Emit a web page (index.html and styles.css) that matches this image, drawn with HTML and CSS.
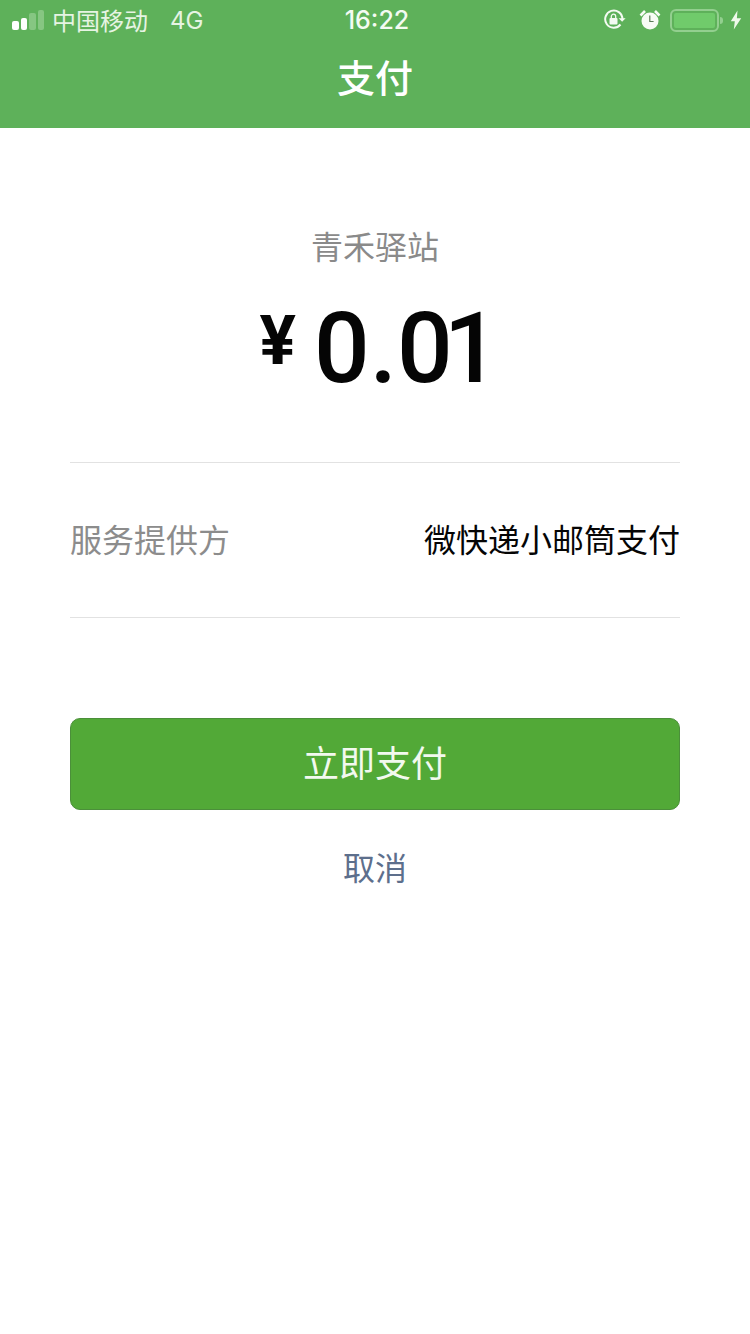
FILE: index.html
```html
<!DOCTYPE html>
<html>

<head>
  <meta charset="UTF-8">
  <meta name="viewport" content="width=device-width, initial-scale=1">
  <title>支付</title>
  <link rel="stylesheet" href="styles.css">
</head>

<body>
  <div class="top">
    <div class="status">
      <div class="status-left">
        <div class="signal">
          <span class="bar bar1"></span>
          <span class="bar bar2"></span>
          <span class="bar bar3"></span>
          <span class="bar bar4"></span>
        </div>
        <span class="carrier">中国移动</span>
        <span class="net">4G</span>
      </div>
      <div class="clock">16:22</div>
      <div class="status-right">
        <svg class="ico-lock" width="24" height="22" viewBox="0 0 24 22">
          <path d="M17.5 15.5A8.6 8.6 0 1 1 19.4 10" fill="none" stroke="#f4fbf2" stroke-width="2"/>
          <path d="M15.6 9.2h7l-3.500 3.600z" fill="#f4fbf2"/>
          <rect x="6.500" y="9" width="8" height="6.500" rx="1" fill="#f4fbf2"/>
          <path d="M8.300 9V7.400a2.200 2.200 0 0 1 4.400 0V9" fill="none" stroke="#f4fbf2" stroke-width="1.300"/>
        </svg>
        <svg class="ico-alarm" width="22" height="22" viewBox="0 0 22 22">
          <circle cx="11" cy="12" r="8.500" fill="#f7fcf5"/>
          <path d="M1.500 6.500 6 2M20.500 6.500 16 2" stroke="#f7fcf5" stroke-width="2.600" fill="none"/>
          <path d="M10.800 6.500v6h3.800" stroke="#5b7d58" stroke-width="1.200" fill="none"/>
        </svg>
        <div class="battery">
          <div class="battery-fill"></div>
        </div>
        <span class="battery-tip"></span>
        <svg class="ico-bolt" width="12" height="20" viewBox="0 0 12 20">
          <path d="M7.500 0.500 0.800 11.200h4L3.800 19.500l7.400-11.300h-4.300z" fill="#eef9ea"/>
        </svg>
      </div>
    </div>
    <div class="title">支付</div>
  </div>

  <div class="main">
    <div class="shop">青禾驿站</div>
    <div class="amount">
      <span class="yen">¥</span>
      <span class="num">0.<span class="num-tight">0</span>1</span>
    </div>
    <div class="row">
      <span class="row-label">服务提供方</span>
      <span class="row-value">微快递小邮筒支付</span>
    </div>
    <button class="pay">立即支付</button>
    <div class="cancel">取消</div>
  </div>
</body>

</html>
```

FILE: styles.css
```css
body {
  margin: 0;
  padding: 0;
  height: 1334px;
  overflow: hidden;
  background-color: #fff;
  font-family: "Noto Sans CJK SC", "Liberation Sans", sans-serif;
}

.top {
  height: 128px;
  background-color: #5eb15a;
  color: #fff;
}

/* status bar */
.status {
  height: 40px;
  padding: 0 8px 0 12px;
  display: grid;
  grid-template-columns: 1fr auto 1fr;
  align-items: center;
}
.status-left, .status-right {
  display: flex;
  align-items: center;
}
.status-right {
  justify-content: flex-end;
}
.signal {
  display: flex;
  align-items: flex-end;
  gap: 2px;
  height: 20px;
}
.bar {
  width: 6.5px;
  border-radius: 2px;
  background-color: #fff;
}
.bar1 { height: 9px; }
.bar2 { height: 12px; }
.bar3 { height: 17px; background-color: #86c682; }
.bar4 { height: 20px; background-color: #86c682; }
.carrier {
  margin-left: 8px;
  font-size: 24px;
  line-height: 40px;
  color: #e6f4e3;
}
.net {
  margin-left: 22px;
  font-family: "Inter", "Liberation Sans", sans-serif;
  font-size: 24px;
  color: #e6f4e3;
}
.clock {
  font-family: "Inter", "Liberation Sans", sans-serif;
  font-size: 25px;
  font-weight: 500;
  color: #f4fbf2;
}
.ico-alarm {
  margin-left: 12px;
}
.battery {
  margin-left: 9px;
  width: 49px;
  height: 23px;
  box-sizing: border-box;
  padding: 2px;
  border: 2px solid #93cf8f;
  border-radius: 6px;
}
.battery-fill {
  height: 100%;
  border-radius: 2px;
  background-color: #70cb6b;
}
.battery-tip {
  margin-left: 1px;
  width: 3px;
  height: 7px;
  border-radius: 0 3px 3px 0;
  background-color: #93cf8f;
}
.ico-bolt {
  margin-left: 7px;
}
.title {
  margin-top: 4px;
  text-align: center;
  font-size: 38px;
  font-weight: 500;
  line-height: 64px;
}

/* content */
.main {
  padding: 0 70px;
  text-align: center;
}
.shop {
  padding-top: 95px;
  font-size: 32px;
  line-height: 44px;
  color: #8a8a8a;
}
.amount {
  height: 173px;
  padding: 22px 0 0 9px;
  display: flex;
  justify-content: center;
  align-items: flex-start;
  color: #050505;
  font-family: "Roboto", "Liberation Sans", sans-serif;
}
.yen {
  margin-top: 2px;
  margin-right: 18px;
  font-size: 68px;
  font-weight: 700;
  line-height: 100px;
}
.num {
  margin-top: 4px;
  font-size: 98px;
  font-weight: 500;
  line-height: 112px;
}
.num-tight {
  letter-spacing: -9px;
}
.row {
  height: 150px;
  padding-bottom: 4px;
  display: flex;
  justify-content: space-between;
  align-items: center;
  border-top: 1px solid #e2e2e2;
  border-bottom: 1px solid #e2e2e2;
  font-size: 32px;
}
.row-label {
  color: #8c8c8c;
}
.row-value {
  color: #050505;
}
.pay {
  display: block;
  width: 100%;
  height: 92px;
  margin-top: 100px;
  padding: 0 0 6px;
  box-sizing: border-box;
  border: 1px solid #4b8f3a;
  border-radius: 10px;
  background-color: #52a937;
  color: #f2f9ef;
  font-family: inherit;
  font-size: 36px;
}
.cancel {
  margin-top: 31px;
  font-size: 32px;
  line-height: 50px;
  color: #5d6f8c;
}
```
